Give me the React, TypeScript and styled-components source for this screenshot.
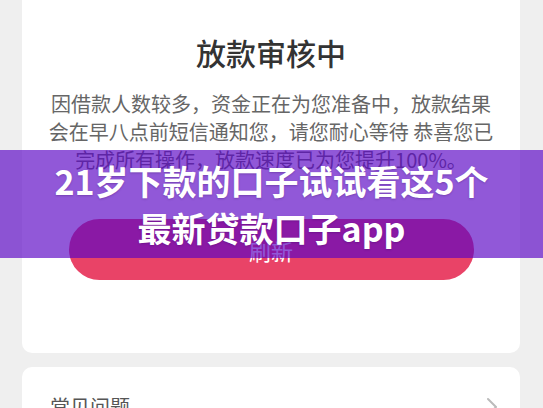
import React from "react";
import styled, { createGlobalStyle } from "styled-components";

const Global = createGlobalStyle`
  html, body {
    margin: 0;
    padding: 0;
    background: #efefef;
    overflow: hidden;
  }
  body {
    font-family: "Noto Sans CJK SC", "Noto Sans", sans-serif;
  }
`;

const Page = styled.div`
  position: relative;
  width: 543px;
  height: 408px;
  overflow: hidden;
  background: #efefef;
  padding: 0 23px 0 22px;
  box-sizing: border-box;
  display: flex;
  flex-direction: column;
  gap: 14px;
`;

const StatusCard = styled.section`
  background: #ffffff;
  border-radius: 0 0 10px 10px;
  padding: 32px 0 73px;
  display: flex;
  flex-direction: column;
  align-items: center;
`;

const Title = styled.h1`
  margin: 0;
  font-size: 30px;
  line-height: 40px;
  font-weight: 500;
  color: #333333;
`;

const Message = styled.p`
  margin: 18px 0 0;
  font-size: 20px;
  line-height: 28px;
  color: #666666;
  text-align: center;
  white-space: nowrap;
`;

const RefreshButton = styled.button`
  margin-top: 45px;
  width: 405px;
  height: 61px;
  border: none;
  border-radius: 31px;
  background: #e94367;
  color: #ffffff;
  font-family: inherit;
  font-size: 22px;
  cursor: pointer;
`;

const FaqCard = styled.section`
  background: #ffffff;
  border-radius: 10px;
  padding: 26px 22px 20px 28px;
  display: flex;
  align-items: center;
  justify-content: space-between;
  flex-shrink: 0;
`;

const FaqLabel = styled.span`
  font-size: 20px;
  line-height: 28px;
  color: #555555;
`;

const Banner = styled.div`
  position: absolute;
  left: 0;
  right: 0;
  top: 150px;
  height: 108px;
  background: rgba(90, 5, 196, 0.665);
  display: flex;
  flex-direction: column;
  align-items: center;
  justify-content: center;
`;

const BannerText = styled.div`
  color: #ffffff;
  font-weight: 700;
  font-size: 34px;
  line-height: 47px;
  text-align: center;
  text-shadow: 0 1px 2px rgba(40, 0, 80, 0.25);
`;

const Chevron = () => (
  <svg width="12" height="20" viewBox="0 0 12 20" fill="none">
    <path d="M2 2 L10 10 L2 18" stroke="#bbbbbb" strokeWidth="2" strokeLinecap="round" strokeLinejoin="round" />
  </svg>
);

export default function App() {
  return (
    <>
      <Global />
      <Page>
        <StatusCard>
          <Title>放款审核中</Title>
          <Message>
            因借款人数较多，资金正在为您准备中，放款结果
            <br />
            会在早八点前短信通知您，请您耐心等待 恭喜您已
            <br />
            完成所有操作，放款速度已为您提升100%。
          </Message>
          <RefreshButton>刷新</RefreshButton>
        </StatusCard>
        <FaqCard>
          <FaqLabel>常见问题</FaqLabel>
          <Chevron />
        </FaqCard>
        <Banner>
          <BannerText>21岁下款的口子试试看这5个</BannerText>
          <BannerText>最新贷款口子app</BannerText>
        </Banner>
      </Page>
    </>
  );
}
